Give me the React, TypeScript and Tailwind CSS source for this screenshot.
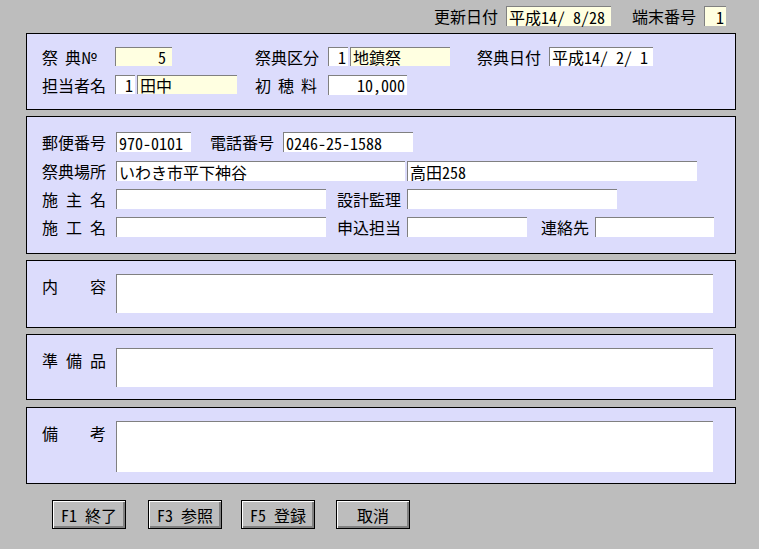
import React from "react";

const font = "[font-family:'Noto_Sans_Mono_CJK_JP','Noto_Sans_CJK_JP',sans-serif]";

interface FieldProps {
  w: string;
  h?: string;
  value?: string;
  yellow?: boolean;
  right?: boolean;
  className?: string;
}

function Field({ w, h = "h-[20px]", value, yellow, right, className }: FieldProps) {
  return (
    <div
      className={`${w} ${h} shrink-0 border-t border-l border-[#808080] ${
        yellow ? "bg-[#ffffe1]" : "bg-white"
      } flex items-center px-[2px] text-[16px] leading-[18px] whitespace-nowrap ${
        right ? "justify-end" : ""
      } ${className ?? ""}`}
    >
      {value}
    </div>
  );
}

function Spread({ chars, w = "w-[64px]" }: { chars: string[]; w?: string }) {
  return (
    <div className={`${w} flex justify-between text-[16px] leading-[18px]`}>
      {chars.map((c, i) => (
        <span key={i}>{c}</span>
      ))}
    </div>
  );
}

function Button({ label }: { label: string }) {
  return (
    <button className="w-[74px] h-[29px] border border-black bg-[#bdbdbd] shadow-[inset_1px_1px_0_#ffffff,inset_-2px_-2px_0_#808080] text-[16px] leading-[18px] flex items-center justify-center">
      {label}
    </button>
  );
}

export default function App() {
  return (
    <div className={`w-[759px] h-[549px] bg-[#bdbdbd] text-black ${font}`}>
      {/* header */}
      <div className="h-[33px] flex justify-end items-start pt-[6px] pr-[33px] text-[16px] leading-[18px]">
        <span className="mt-[1px] mr-[8px]">更新日付</span>
        <Field w="w-[105px]" value="平成14/ 8/28" yellow />
        <span className="mt-[1px] ml-[21px] mr-[8px]">端末番号</span>
        <Field w="w-[22px]" value="1" yellow right />
      </div>

      {/* panel 1 */}
      <div className="ml-[26px] w-[710px] h-[77px] border border-black bg-[#dcdcfc] pt-[13px] pl-[15px] flex flex-col gap-[9px] text-[16px] leading-[18px]">
        <div className="flex items-center h-[19px]">
          <div className="w-[73px] flex">
            <span>祭</span>
            <span className="ml-[7px]">典№</span>
          </div>
          <Field w="w-[57px]" h="h-[19px]" value="5" yellow right className="pr-[6px]" />
          <span className="ml-[83px] w-[73px]">祭典区分</span>
          <Field w="w-[20px]" h="h-[19px]" value="1" right />
          <Field w="w-[100px]" h="h-[19px]" value="地鎮祭" yellow className="ml-[2px]" />
          <span className="ml-[27px] w-[72px]">祭典日付</span>
          <Field w="w-[104px]" h="h-[19px]" value="平成14/ 2/ 1" />
        </div>
        <div className="flex items-center h-[19px]">
          <span className="w-[73px]">担当者名</span>
          <Field w="w-[20px]" h="h-[19px]" value="1" right />
          <Field w="w-[100px]" h="h-[19px]" value="田中" yellow className="ml-[2px]" />
          <div className="ml-[18px] w-[73px]">
            <Spread chars={["初", "穂", "料"]} w="w-[62px]" />
          </div>
          <Field w="w-[79px]" h="h-[20px]" value="10,000" right />
        </div>
      </div>

      {/* panel 2 */}
      <div className="ml-[26px] mt-[6px] w-[710px] h-[138px] border border-black bg-[#dcdcfc] pt-[15px] pl-[15px] flex flex-col text-[16px] leading-[18px]">
        <div className="flex items-center h-[20px]">
          <span className="w-[74px]">郵便番号</span>
          <Field w="w-[75px]" value="970-0101" />
          <span className="ml-[19px] w-[73px]">電話番号</span>
          <Field w="w-[130px]" value="0246-25-1588" />
        </div>
        <div className="flex items-center h-[20px] mt-[9px]">
          <span className="w-[74px]">祭典場所</span>
          <Field w="w-[289px]" value="いわき市平下神谷" />
          <Field w="w-[290px]" value="高田258" className="ml-[2px]" />
        </div>
        <div className="flex items-center h-[20px] mt-[8px]">
          <div className="w-[74px]">
            <Spread chars={["施", "主", "名"]} />
          </div>
          <Field w="w-[210px]" />
          <span className="ml-[11px] w-[70px]">設計監理</span>
          <Field w="w-[210px]" />
        </div>
        <div className="flex items-center h-[20px] mt-[8px]">
          <div className="w-[74px]">
            <Spread chars={["施", "工", "名"]} />
          </div>
          <Field w="w-[210px]" />
          <span className="ml-[11px] w-[70px]">申込担当</span>
          <Field w="w-[120px]" />
          <span className="ml-[14px] w-[54px]">連絡先</span>
          <Field w="w-[119px]" />
        </div>
      </div>

      {/* panel 3 */}
      <div className="ml-[26px] mt-[6px] w-[710px] h-[68px] border border-black bg-[#dcdcfc] pt-[13px] pl-[15px] flex items-start text-[16px] leading-[18px]">
        <div className="w-[74px] pt-[3px]">
          <Spread chars={["内", "容"]} />
        </div>
        <Field w="w-[597px]" h="h-[39px]" />
      </div>

      {/* panel 4 */}
      <div className="ml-[26px] mt-[6px] w-[710px] h-[66px] border border-black bg-[#dcdcfc] pt-[13px] pl-[15px] flex items-start text-[16px] leading-[18px]">
        <div className="w-[74px] pt-[3px]">
          <Spread chars={["準", "備", "品"]} />
        </div>
        <Field w="w-[597px]" h="h-[39px]" />
      </div>

      {/* panel 5 */}
      <div className="ml-[26px] mt-[7px] w-[710px] h-[77px] border border-black bg-[#dcdcfc] pt-[13px] pl-[15px] flex items-start text-[16px] leading-[18px]">
        <div className="w-[74px] pt-[3px]">
          <Spread chars={["備", "考"]} />
        </div>
        <Field w="w-[597px]" h="h-[51px]" />
      </div>

      {/* buttons */}
      <div className="mt-[16px] ml-[52px] flex">
        <Button label="F1 終了" />
        <div className="ml-[22px]">
          <Button label="F3 参照" />
        </div>
        <div className="ml-[19px]">
          <Button label="F5 登録" />
        </div>
        <div className="ml-[21px]">
          <Button label="取消" />
        </div>
      </div>
    </div>
  );
}
